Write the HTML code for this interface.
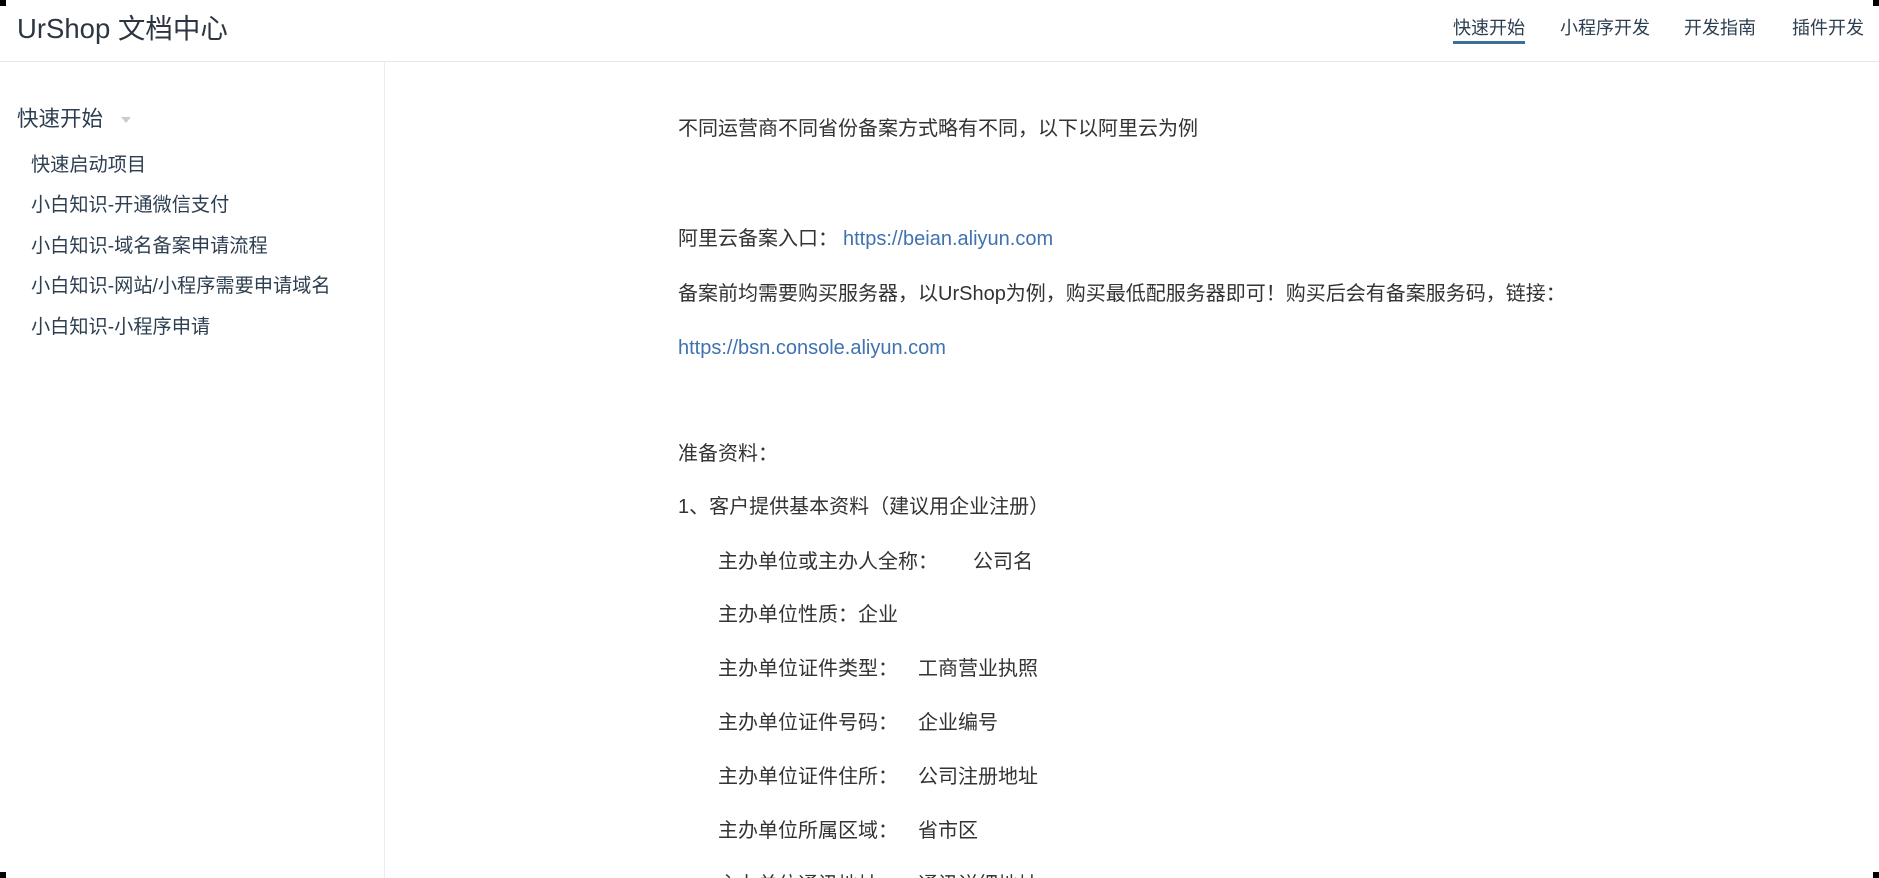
<!DOCTYPE html>
<html><head><meta charset="utf-8">
<style>
*{margin:0;padding:0;box-sizing:border-box}
html,body{width:1879px;height:878px;overflow:hidden;background:#fff}
body{position:relative;font-family:"Liberation Sans","Noto Sans CJK SC",sans-serif;color:#333}
.a{position:absolute;white-space:nowrap;line-height:1}
.hdr{position:absolute;left:0;top:0;width:1879px;height:62px;border-bottom:1.5px solid #e8e8e8}
.logo{left:17px;top:15px;font-size:27.5px;color:#2c3540}
.nav{top:19px;font-size:18px;color:#2c3e50}
.ul{position:absolute;left:1453px;top:41px;width:72px;height:3px;background:#3c6f98}
.side{position:absolute;left:0;top:62px;width:385px;height:816px;border-right:1.5px solid #eaecef}
.st{left:17px;top:109px;font-size:21.5px;color:#2c3e50}
.tri{position:absolute;left:121px;top:117px;width:0;height:0;border-left:5px solid transparent;border-right:5px solid transparent;border-top:6px solid #ccc}
.si{left:31px;font-size:19.2px;color:#2c3e50}
.c{left:678px;font-size:20px;color:#333}
.i{left:718px;font-size:20px;color:#333}
.v{left:918px;font-size:20px;color:#333}
a{color:#3f72af;text-decoration:none}
.sq{position:absolute;width:6px;height:6px;background:#000}
</style></head><body>
<div class="hdr"></div>
<div class="a logo">UrShop 文档中心</div>
<div class="a nav" style="left:1453px">快速开始</div>
<div class="a nav" style="left:1560px">小程序开发</div>
<div class="a nav" style="left:1684px">开发指南</div>
<div class="a nav" style="left:1792px">插件开发</div>
<div class="ul"></div>

<div class="side"></div>
<div class="a st">快速开始</div>
<div class="tri"></div>
<div class="a si" style="top:156px">快速启动项目</div>
<div class="a si" style="top:196px">小白知识-开通微信支付</div>
<div class="a si" style="top:237px">小白知识-域名备案申请流程</div>
<div class="a si" style="top:277px">小白知识-网站/小程序需要申请域名</div>
<div class="a si" style="top:318px">小白知识-小程序申请</div>

<div class="a c" style="top:119px">不同运营商不同省份备案方式略有不同，以下以阿里云为例</div>
<div class="a c" style="top:229px">阿里云备案入口：</div><div class="a c" style="left:843px;top:229px"><a>https://beian.aliyun.com</a></div>
<div class="a c" style="top:284px">备案前均需要购买服务器，以UrShop为例，购买最低配服务器即可！购买后会有备案服务码，链接：</div>
<div class="a c" style="top:338px"><a>https://bsn.console.aliyun.com</a></div>
<div class="a c" style="top:444px">准备资料：</div>
<div class="a c" style="top:497px">1、客户提供基本资料（建议用企业注册）</div>
<div class="a i" style="top:552px">主办单位或主办人全称：</div><div class="a i" style="left:973px;top:552px">公司名</div>
<div class="a i" style="top:605px">主办单位性质：</div><div class="a i" style="left:858px;top:605px">企业</div>
<div class="a i" style="top:659px">主办单位证件类型：</div><div class="a v" style="top:659px">工商营业执照</div>
<div class="a i" style="top:713px">主办单位证件号码：</div><div class="a v" style="top:713px">企业编号</div>
<div class="a i" style="top:767px">主办单位证件住所：</div><div class="a v" style="top:767px">公司注册地址</div>
<div class="a i" style="top:821px">主办单位所属区域：</div><div class="a v" style="top:821px">省市区</div>
<div class="a i" style="top:875px">主办单位通讯地址：</div><div class="a v" style="top:875px">通讯详细地址</div>

<div class="sq" style="left:0;top:0"></div>
<div class="sq" style="left:1873px;top:0"></div>
<div class="sq" style="left:0;top:872px"></div>
<div class="sq" style="left:1873px;top:872px"></div>
</body></html>
